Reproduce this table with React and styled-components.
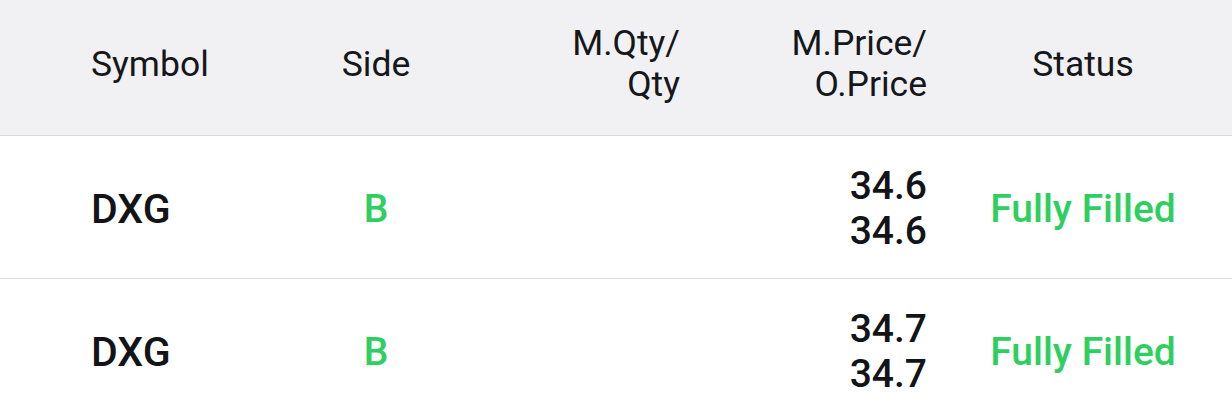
import React from "react";
import styled, { createGlobalStyle } from "styled-components";

const Global = createGlobalStyle`
  html, body { margin: 0; padding: 0; background: #ffffff; }
  body { font-family: Roboto, "Noto Sans", sans-serif; -webkit-font-smoothing: antialiased; }
`;

const Table = styled.div`
  width: 1232px;
  height: 418px;
  overflow: hidden;
  background: #ffffff;
`;

const cols = "250px 252px 178px 247px 1fr";

const HeaderRow = styled.div`
  display: grid;
  grid-template-columns: ${cols};
  box-sizing: border-box;
  height: 136px;
  padding-bottom: 7px;
  background: #f1f1f3;
  border-bottom: 1px solid #d9d9db;
  align-items: center;
`;

const HeadCell = styled.div`
  font-size: 35.5px;
  line-height: 41px;
  font-weight: 400;
  color: #15171a;
  text-align: ${(p) => p.$align || "left"};
  padding-left: ${(p) => p.$pl || 0}px;
`;

const Row = styled.div`
  display: grid;
  grid-template-columns: ${cols};
  box-sizing: border-box;
  height: 143px;
  padding-top: 4px;
  border-bottom: 1px solid #dcdcde;
  align-items: center;
`;

const Cell = styled.div`
  font-size: 39px;
  line-height: 45px;
  font-weight: 500;
  color: ${(p) => (p.$green ? "#2fcf5f" : "#121417")};
  text-align: ${(p) => p.$align || "left"};
  padding-left: ${(p) => p.$pl || 0}px;
`;

const Symbol = styled(Cell)`
  font-size: 41px;
`;

const rows = [
  { sym: "DXG", side: "B", m: "34.6", o: "34.6", status: "Fully Filled" },
  { sym: "DXG", side: "B", m: "34.7", o: "34.7", status: "Fully Filled" },
];

export default function App() {
  return (
    <>
      <Global />
      <Table>
        <HeaderRow>
          <HeadCell $pl={91}>Symbol</HeadCell>
          <HeadCell $align="center">Side</HeadCell>
          <HeadCell $align="right">
            M.Qty/
            <br />
            Qty
          </HeadCell>
          <HeadCell $align="right">
            M.Price/
            <br />
            O.Price
          </HeadCell>
          <HeadCell $align="center" $pl={7}>Status</HeadCell>
        </HeaderRow>
        {rows.map((r, i) => (
          <Row key={i}>
            <Symbol $pl={91}>{r.sym}</Symbol>
            <Cell $align="center" $green>{r.side}</Cell>
            <Cell $align="right"></Cell>
            <Cell $align="right">
              {r.m}
              <br />
              {r.o}
            </Cell>
            <Cell $align="center" $pl={7} $green>{r.status}</Cell>
          </Row>
        ))}
      </Table>
    </>
  );
}
